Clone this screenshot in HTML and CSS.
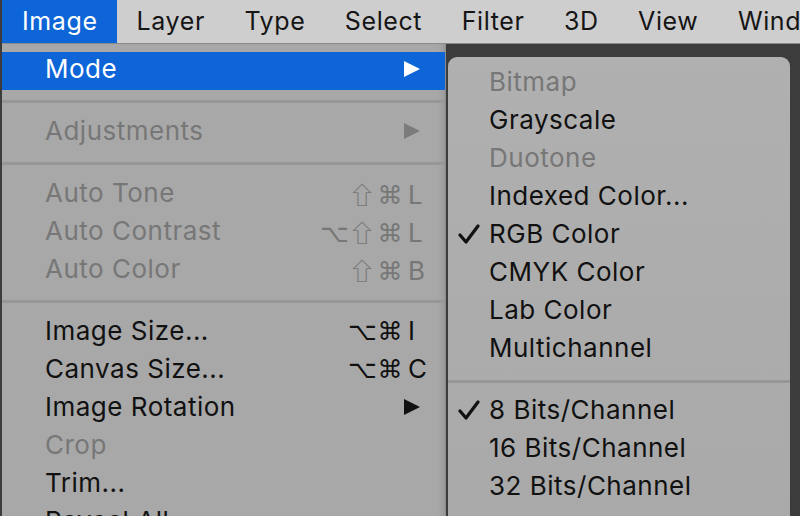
FILE: index.html
```html
<!DOCTYPE html>
<html lang="en">
<head>
    <meta charset="UTF-8">
    <title>Image Menu</title>
    <link rel="stylesheet" href="styles.css">
</head>
<body>
    <div class="menubar">
        <span class="bar-item active">Image</span>
        <span class="bar-item">Layer</span>
        <span class="bar-item">Type</span>
        <span class="bar-item">Select</span>
        <span class="bar-item">Filter</span>
        <span class="bar-item">3D</span>
        <span class="bar-item">View</span>
        <span class="bar-item">Wind</span>
    </div>

    <div class="workspace">
        <div class="menu">
            <div class="item selected">
                <span>Mode</span>
                <svg class="arrow" viewBox="0 0 18 18"><polygon points="1,1 17,9 1,17" fill="#fff"/></svg>
            </div>
            <div class="sep"></div>
            <div class="item disabled">
                <span>Adjustments</span>
                <svg class="arrow" viewBox="0 0 18 18"><polygon points="1,1 17,9 1,17" fill="#7b7b7b"/></svg>
            </div>
            <div class="sep"></div>
            <div class="item disabled">
                <span>Auto Tone</span>
                <span class="keys"><span class="mod shift">⇧</span><span class="mod">⌘</span><span class="key">L</span></span>
            </div>
            <div class="item disabled">
                <span>Auto Contrast</span>
                <span class="keys"><span class="mod">⌥</span><span class="mod shift">⇧</span><span class="mod">⌘</span><span class="key">L</span></span>
            </div>
            <div class="item disabled">
                <span>Auto Color</span>
                <span class="keys"><span class="mod shift">⇧</span><span class="mod">⌘</span><span class="key">B</span></span>
            </div>
            <div class="sep"></div>
            <div class="item">
                <span>Image Size...</span>
                <span class="keys"><span class="mod">⌥</span><span class="mod">⌘</span><span class="key">I</span></span>
            </div>
            <div class="item">
                <span>Canvas Size...</span>
                <span class="keys"><span class="mod">⌥</span><span class="mod">⌘</span><span class="key">C</span></span>
            </div>
            <div class="item">
                <span>Image Rotation</span>
                <svg class="arrow" viewBox="0 0 18 18"><polygon points="1,1 17,9 1,17" fill="#111"/></svg>
            </div>
            <div class="item disabled"><span>Crop</span></div>
            <div class="item"><span>Trim...</span></div>
            <div class="item"><span>Reveal All</span></div>
        </div>

        <div class="behind">
            <div class="submenu">
                <div class="sub-item disabled">Bitmap</div>
                <div class="sub-item">Grayscale</div>
                <div class="sub-item disabled">Duotone</div>
                <div class="sub-item">Indexed Color...</div>
                <div class="sub-item">
                    <svg class="check" viewBox="0 0 22 20"><path d="M2 11 L8 18 L20 2" fill="none" stroke="#111" stroke-width="3.2" stroke-linecap="round" stroke-linejoin="round"/></svg>
                    RGB Color
                </div>
                <div class="sub-item">CMYK Color</div>
                <div class="sub-item">Lab Color</div>
                <div class="sub-item">Multichannel</div>
                <div class="sep"></div>
                <div class="sub-item">
                    <svg class="check" viewBox="0 0 22 20"><path d="M2 11 L8 18 L20 2" fill="none" stroke="#111" stroke-width="3.2" stroke-linecap="round" stroke-linejoin="round"/></svg>
                    8 Bits/Channel
                </div>
                <div class="sub-item">16 Bits/Channel</div>
                <div class="sub-item">32 Bits/Channel</div>
            </div>
        </div>
    </div>
</body>
</html>
```

FILE: styles.css
```css
body {
    margin: 0;
    width: 800px;
    height: 516px;
    overflow: hidden;
    background: #3c3c3c;
    font-family: Inter, 'Noto Sans', sans-serif;
    color: #111;
    padding-left: 2px;
    box-sizing: border-box;
}

.menubar {
    height: 43px;
    background: #cecece;
    border-bottom: 1px solid #8a8a8a;
    display: flex;
    white-space: nowrap;
    overflow: hidden;
    font-size: 25px;
    letter-spacing: 0.6px;
}

.bar-item {
    padding: 0 19.5px 0 20px;
    line-height: 43px;
    color: #151515;
}

.bar-item.active {
    background: #0d65d8;
    color: #fff;
    padding-right: 19px;
}

.workspace {
    display: flex;
    height: 472px;
}

.menu {
    width: 443px;
    background: #a8a8a8;
    border-right: 1px solid #8d8d8d;
    box-shadow: inset -6px 0 6px -4px rgba(0,0,0,0.12);
    padding-top: 8px;
    font-size: 26px;
    letter-spacing: 0.5px;
}

.item {
    height: 38px;
    display: flex;
    align-items: center;
    justify-content: space-between;
    padding: 0 19px 0 43px;
}

.item > span {
    margin-top: -5px;
}

.item.selected {
    background: #0d65d8;
    color: #fff;
}

.disabled {
    color: #777;
}

.keys {
    display: flex;
    align-items: baseline;
    letter-spacing: 0;
}

.mod {
    width: 28px;
    text-align: center;
    font-family: 'DejaVu Sans', sans-serif;
    font-size: 25px;
}

.mod.shift {
    font-family: 'Noto Sans CJK SC', 'DejaVu Sans', sans-serif;
    font-size: 26px;
    transform: scale(1.08, 0.92);
    transform-origin: 50% 70%;
}

.key {
    width: 18px;
    margin-left: 4px;
}

.arrow {
    width: 18px;
    height: 18px;
    margin: -5px 5px 0 0;
}

.sep {
    height: 3px;
    background: #979797;
    margin: 10px 0 11px;
}

.behind {
    flex: 1;
    padding: 13px 10px 0 2px;
}

.submenu {
    background: linear-gradient(#b0b0b0, #a9a9a9);
    border-radius: 9px 9px 0 0;
    height: 100%;
    padding-top: 9px;
    font-size: 26px;
    letter-spacing: 0.5px;
}

.sub-item {
    position: relative;
    height: 38px;
    line-height: 32px;
    padding-left: 41px;
}

.check {
    position: absolute;
    left: 10px;
    top: 6px;
    width: 22px;
    height: 20px;
}
```
